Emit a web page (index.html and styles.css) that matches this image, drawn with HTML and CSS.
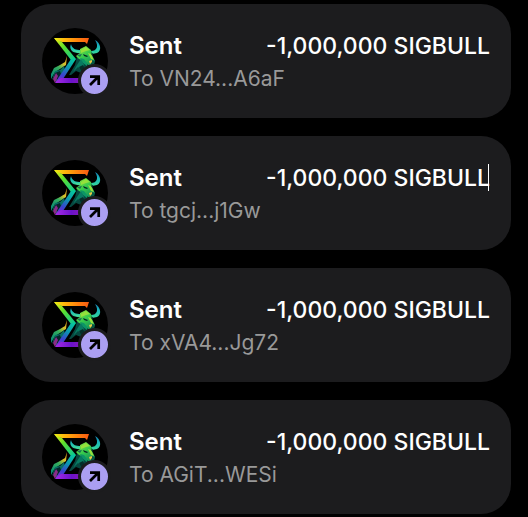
FILE: index.html
```html
<!DOCTYPE html>
<html lang="en">
<head>
<meta charset="utf-8">
<meta name="viewport" content="width=device-width, initial-scale=1">
<title>Activity</title>
<link rel="stylesheet" href="styles.css">
</head>
<body>
<svg class="defs" aria-hidden="true">
  <defs>
    <linearGradient id="top" x1="12" y1="0" x2="47" y2="0" gradientUnits="userSpaceOnUse">
      <stop offset="0" stop-color="#e8ee16"/><stop offset=".3" stop-color="#ffb60b"/><stop offset=".65" stop-color="#ff850c"/><stop offset="1" stop-color="#f95a12"/>
    </linearGradient>
    <linearGradient id="spine" x1="14" y1="10" x2="34" y2="31" gradientUnits="userSpaceOnUse">
      <stop offset="0" stop-color="#f3ec15"/><stop offset=".4" stop-color="#5fe02b"/><stop offset="1" stop-color="#05c79a"/>
    </linearGradient>
    <linearGradient id="leg" x1="33" y1="30" x2="15" y2="54" gradientUnits="userSpaceOnUse">
      <stop offset="0" stop-color="#08cf9a"/><stop offset=".4" stop-color="#0b96b0"/><stop offset=".7" stop-color="#3a42d0"/><stop offset="1" stop-color="#9222dc"/>
    </linearGradient>
    <linearGradient id="base" x1="13" y1="0" x2="46" y2="0" gradientUnits="userSpaceOnUse">
      <stop offset="0" stop-color="#a82be8"/><stop offset=".5" stop-color="#6a13c9"/><stop offset="1" stop-color="#9c1bb0"/>
    </linearGradient>
    <linearGradient id="tail" x1="26" y1="30" x2="10" y2="48" gradientUnits="userSpaceOnUse">
      <stop offset="0" stop-color="#f2a51c"/><stop offset=".3" stop-color="#d3c02d"/><stop offset=".55" stop-color="#36ae5d"/><stop offset="1" stop-color="#0a8d72"/>
    </linearGradient>
    <linearGradient id="horn" x1="0" y1="11" x2="0" y2="26" gradientUnits="userSpaceOnUse">
      <stop offset="0" stop-color="#1670a8"/><stop offset=".45" stop-color="#19b5be"/><stop offset="1" stop-color="#35d798"/>
    </linearGradient>
    <linearGradient id="face" x1="38" y1="18" x2="52" y2="37" gradientUnits="userSpaceOnUse">
      <stop offset="0" stop-color="#8de43b"/><stop offset=".45" stop-color="#35c94d"/><stop offset="1" stop-color="#08805f"/>
    </linearGradient>
    <symbol id="token" viewBox="0 0 66 66">
      <circle cx="33" cy="33" r="33" fill="#000"/>
      <path d="M25 28 23 34 18 37 12 40 9 46 9 51 13 44 18 41 24 37Z" fill="url(#tail)"/>
      <path d="M22 38 18 42 13 43 10 52 13 48 14 55 18 48 23 42Z" fill="#087066"/>
      <path d="m18 43-5 2-2 6 3-3 1 4 4-6Z" fill="#04252a"/>
      <path d="m14 45-3 6 2 4 3-7Z" fill="#8b2b88"/>
      <path d="M12 10h35l-2 6-2-2H20l-5-1Z" fill="url(#top)"/>
      <path d="m12 10 8 4 14 17-5 1Z" fill="url(#spine)"/>
      <path d="M29 31h5L21 51l-6 3-2 1Z" fill="url(#leg)"/>
      <path d="M19 50h27v5H13Z" fill="url(#base)"/>
      <path d="M35 29 38 26 44 29 46 38 44 46 39 45 34 43 29 47 27 47 33 37Z" fill="#064840"/>
      <path d="m35 37 4-6 3 6-2 5-4-3-5 5Z" fill="#087a62"/>
      <path d="m37 39 4-2 3 6-4 1Z" fill="#042e2a"/>
      <path d="M29 16c1 5 5 6 10 6l1 3c-7 1-14-2-11-9Z" fill="url(#horn)"/>
      <path d="M31 21c3 3 6 3 9 2v1c-4 1-7 0-9-3Z" fill="#62df8c"/>
      <path d="M53 12c6 3 7 11 2 13l-5 1-1-3c6 0 8-5 4-11Z" fill="url(#horn)"/>
      <path d="m38 21 6-3 5 4 1 5 3 6-2 4-5 0-4-4-5-2-3-3 4-3Z" fill="url(#face)"/>
      <path d="m39 22 5-3 4 3-4 1-5 2Zm7 3 3 1 3 6-3-1Z" fill="#96e03c"/>
      <path d="m35 27 5-1-2 3Z" fill="#126f59"/>
      <path d="m41 26 5 2-1 1-3-1Zm8 0 2-1v3Z" fill="#042923"/>
      <path d="m49 32 4 1-1 4-3-1Z" fill="#065544"/>
      <path d="m47 33 3-1 0 2-2 2Z" fill="#e5c843"/>
      <path d="m38 30 4 1 3 4 0 3-4-3Z" fill="#0c9566"/>
    </symbol>
    <symbol id="arrow" viewBox="0 0 27 27">
      <path d="M9 18 17 10M9 9.7h8.7V18" fill="none" stroke="#000" stroke-width="2.7"/>
    </symbol>
  </defs>
</svg>
<main class="activity">
  <article class="card">
    <div class="avatar"><svg class="token"><use href="#token"/></svg><span class="badge"><svg class="arrow"><use href="#arrow"/></svg></span></div>
    <div class="details">
      <div class="summary"><h2 class="title">Sent</h2><span class="amount">-1,000,000 SIGBULL</span></div>
      <p class="recipient">To VN24...A6aF</p>
    </div>
  </article>
  <article class="card">
    <div class="avatar"><svg class="token"><use href="#token"/></svg><span class="badge"><svg class="arrow"><use href="#arrow"/></svg></span></div>
    <div class="details">
      <div class="summary"><h2 class="title">Sent</h2><span class="amount caret">-1,000,000 SIGBULL</span></div>
      <p class="recipient">To tgcj...j1Gw</p>
    </div>
  </article>
  <article class="card">
    <div class="avatar"><svg class="token"><use href="#token"/></svg><span class="badge"><svg class="arrow"><use href="#arrow"/></svg></span></div>
    <div class="details">
      <div class="summary"><h2 class="title">Sent</h2><span class="amount">-1,000,000 SIGBULL</span></div>
      <p class="recipient">To xVA4...Jg72</p>
    </div>
  </article>
  <article class="card">
    <div class="avatar"><svg class="token"><use href="#token"/></svg><span class="badge"><svg class="arrow"><use href="#arrow"/></svg></span></div>
    <div class="details">
      <div class="summary"><h2 class="title">Sent</h2><span class="amount">-1,000,000 SIGBULL</span></div>
      <p class="recipient">To AGiT...WESi</p>
    </div>
  </article>
</main>
</body>
</html>
```
FILE: styles.css
```css
* { box-sizing: border-box; }

body {
  margin: 0;
  background: #000;
  color: #fff;
  font-family: Inter, "Liberation Sans", sans-serif;
}

.defs { position: absolute; width: 0; height: 0; }

.activity {
  display: flex;
  flex-direction: column;
  gap: 18px;
  padding: 4px 17px 3px 21px;
}

.card {
  display: flex;
  align-items: center;
  gap: 21px;
  padding: 24px 21px;
  border-radius: 30px;
  background: #1c1c1e;
}

.avatar {
  position: relative;
  flex: none;
  width: 66px;
  height: 66px;
}

.token, .arrow { display: block; width: 100%; height: 100%; }

.badge {
  position: absolute;
  right: -3px;
  bottom: -3px;
  width: 33px;
  height: 33px;
  border: 3px solid #1c1c1e;
  border-radius: 50%;
  background: #ab9ff2;
}

.details { flex: 1; min-width: 0; }

.summary {
  display: flex;
  align-items: baseline;
  justify-content: space-between;
  line-height: 36px;
}

.title, .recipient { margin: 0; }

.title { font-size: 24px; font-weight: 600; }

.amount {
  position: relative;
  font-size: 23px;
  font-weight: 500;
  white-space: nowrap;
}

.caret::after {
  content: "";
  position: absolute;
  top: 4px;
  right: 1px;
  width: 1px;
  height: 27px;
  background: #fff;
}

.recipient {
  color: #999;
  font-size: 21px;
  line-height: 30px;
}
```
